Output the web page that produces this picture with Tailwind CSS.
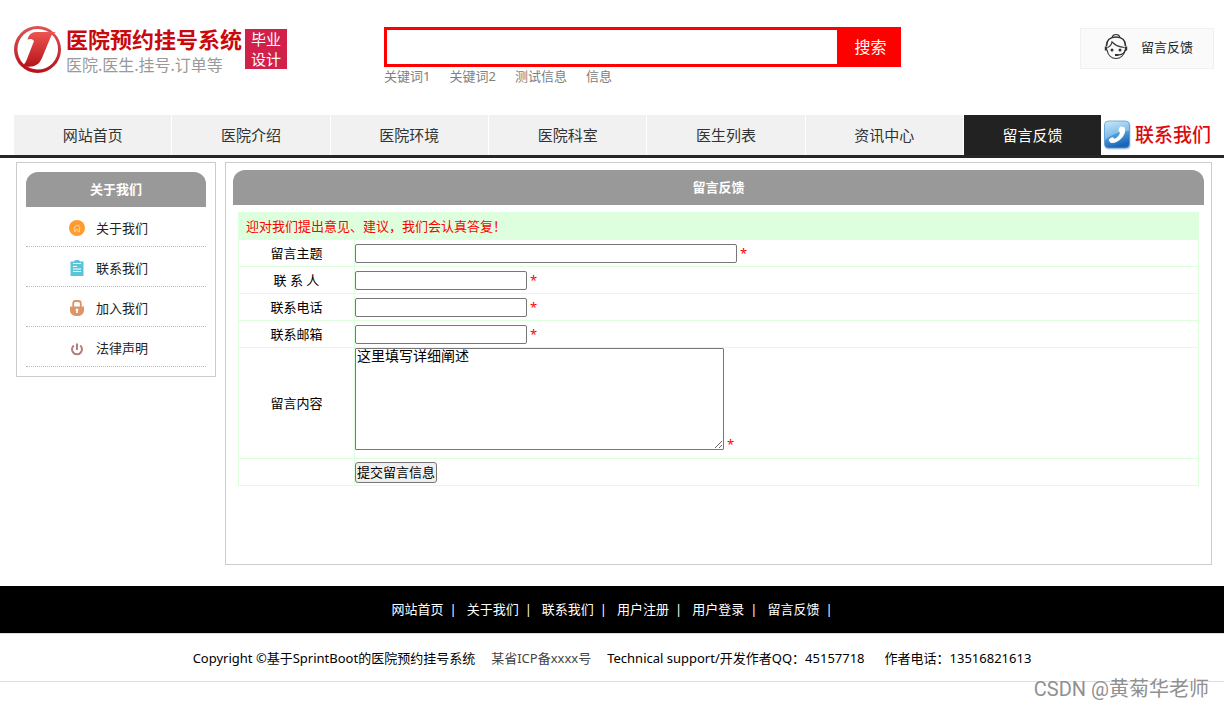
<!DOCTYPE html>
<html lang="zh-CN">
<head>
<meta charset="utf-8">
<meta name="viewport" content="width=device-width, initial-scale=1">
<title>留言反馈</title>
<script src="https://cdn.jsdelivr.net/npm/@tailwindcss/browser@4"></script>
</head>
<body class="relative min-h-screen bg-white font-['Noto_Sans','Noto_Sans_CJK_SC',sans-serif] text-[13px] leading-5 text-black">

<header class="flex h-[115px] items-start pr-[10px] pl-[14px]">
  <a href="#" class="mt-[25px] flex w-[370px] shrink-0 items-start">
    <svg class="h-12 w-12 shrink-0" viewBox="0 0 48 48" aria-hidden="true">
      <defs>
        <linearGradient id="ring" x1="0" y1="0" x2="0" y2="1"><stop offset="0" stop-color="#dc5558"/><stop offset="1" stop-color="#b5141a"/></linearGradient>
        <linearGradient id="jay" x1="0" y1="0" x2="0" y2="1"><stop offset="0" stop-color="#ec5550"/><stop offset="1" stop-color="#b5141a"/></linearGradient>
      </defs>
      <path fill="url(#ring)" fill-rule="evenodd" d="M23.500 1a23.500 23.500 0 1 0 0 47a23.500 23.500 0 1 0 0-47ZM24 4a20 20 0 0 1 20 20a20 20 0 0 1-20 20.500A20 20 0 0 1 3.500 24A20 20 0 0 1 24 4Z"/>
      <path fill="url(#jay)" d="M13.500 14.500c1-4.500 4-7.500 8.500-7.500h20c-3 1-4.500 3-5.500 5.500L28 33c-3 7-8 9.500-16 8.500c-2-.2-2.500-1-2-2c1-1.500 2-3 3-5.500L20 16c-1.500-2.500-4-2.500-6.500-1.500Z"/>
      <path fill="#b5141a" d="M4 33c5 10 16 14 27 11.500C22 49.500 9 47 4 33Z"/>
    </svg>
    <span class="ml-1 block w-[175px]">
      <span class="block text-[22px] leading-[29px] font-bold whitespace-nowrap text-[#c80a0e]">医院预约挂号系统</span>
      <span class="block text-base leading-[22px] whitespace-nowrap text-[#999]">医院.医生.挂号.订单等</span>
    </span>
    <span class="mt-1 ml-1 block w-[42px] bg-[#d1204a] text-center text-[15px] leading-[20px] text-white">毕业<br>设计</span>
  </a>
  <div class="mt-[27px] w-[517px] shrink-0">
    <form class="flex h-10 bg-[#f00]" role="search">
      <input type="search" aria-label="搜索" class="min-w-0 flex-1 appearance-none border-[3px] border-[#f00] bg-white px-2 text-base outline-none">
      <button type="button" class="w-[61px] text-base text-white">搜索</button>
    </form>
    <nav class="flex gap-[19px] leading-[19px] text-[#808080]" aria-label="关键词">
      <a href="#">关键词1</a><a href="#">关键词2</a><a href="#">测试信息</a><a href="#">信息</a>
    </nav>
  </div>
  <a href="#" class="mt-7 ml-auto flex h-[41px] w-[134px] items-center border border-[#f0f0f0] bg-[#fafafa] pb-[3px] pl-[23px] text-[#222]">
    <svg class="mr-[13px] h-7 w-6" viewBox="0 0 24 28" fill="none" stroke="#333" stroke-width="1.200" aria-hidden="true">
      <path d="M8 4.500c1-4 7-4 8 0"/>
      <path d="M2.500 13C2.500 7.500 6 4 12 4s9.500 3.500 9.500 9" stroke-width="1.600"/>
      <path d="M3 17c1 5 4.500 8.500 9 8.500s8-3.500 9-8.500"/>
      <path d="M3.500 14.500c2.500-1 4-3 4.500-5.500c3 3 7 5 12.500 5.500"/>
      <path d="M2 13.500v4M22 13.500v4" stroke-width="2.400"/>
      <path d="M21.500 17c-1 3.500-4 5-8 5"/>
      <path d="M11 22h3.500" stroke-width="2"/>
      <circle cx="8" cy="17" r=".9" fill="#333"/><circle cx="16" cy="17" r=".9" fill="#333"/>
    </svg>
    留言反馈
  </a>
</header>

<nav class="flex h-[43px] border-b-[3px] border-[#262626] pl-[14px] text-[15px] leading-10 text-[#333]" aria-label="主导航">
  <a href="#" class="flex-1 border-r border-white bg-[#f1f1f1] text-center">网站首页</a>
  <a href="#" class="flex-1 border-r border-white bg-[#f1f1f1] text-center">医院介绍</a>
  <a href="#" class="flex-1 border-r border-white bg-[#f1f1f1] text-center">医院环境</a>
  <a href="#" class="flex-1 border-r border-white bg-[#f1f1f1] text-center">医院科室</a>
  <a href="#" class="flex-1 border-r border-white bg-[#f1f1f1] text-center">医生列表</a>
  <a href="#" class="flex-1 border-r border-white bg-[#f1f1f1] text-center">资讯中心</a>
  <a href="#" class="w-[137px] bg-[#222] text-center text-white" aria-current="page">留言反馈</a>
  <a href="#" class="flex w-[123px] items-center gap-1 pl-[2px] text-[19px] font-medium whitespace-nowrap text-[#dc0a0e]">
    <svg class="h-[30px] w-7 shrink-0" viewBox="0 0 28 30" aria-hidden="true">
      <defs><linearGradient id="tile" x1="0" y1="0" x2="0.300" y2="1"><stop offset="0" stop-color="#b5e0f7"/><stop offset=".5" stop-color="#58a9e2"/><stop offset="1" stop-color="#1a66ba"/></linearGradient></defs>
      <rect x="1.500" y="2" width="26" height="27.500" rx="4" fill="#c9d6e8"/>
      <rect x="1.500" y="1" width="25" height="27" rx="4" fill="url(#tile)" stroke="#5a9ad0" stroke-width=".8"/>
      <path d="M2 5c0-2 1-3.500 3.500-3.500h17c2.500 0 3.500 1.500 3.500 3.500v6C18 11 9 14 2 20Z" fill="#fff" opacity=".3"/>
      <path fill="#fff" d="M17.500 6.500l4 .8c1.500 3 .5 7-2.500 10.500c-3.500 4-8 6-11.500 5l-1.800-2.500c0-1.200 2.800-3 4-3l2 1.400c2.300-1 4.800-3.500 5.300-5.900l-1.500-2c0-1.300 1-3.800 2-4.300Z"/>
    </svg>
    联系我们
  </a>
</nav>

<div class="mt-1 mr-3 ml-4 flex items-start gap-[9px]">
  <aside class="w-[200px] shrink-0 border border-[#ccc] p-[9px]">
    <h2 class="rounded-t-[12px] bg-[#999] text-center leading-[35px] font-bold text-white">关于我们</h2>
    <ul class="text-[#222]">
      <li class="border-b border-dotted border-[#bbb]"><a href="#" class="flex h-[39px] items-center gap-[11px] pt-[2px] pl-[43px]">
        <svg class="h-4 w-4" viewBox="0 0 16 16" aria-hidden="true"><circle cx="8" cy="8" r="8" fill="#ff9b2f"/><path d="M4.500 8.200L8 5.200l3.300 2.500M5.300 8v3.700h1.500V9.500h2v2.200h1.700V8M9.800 5.500V4.200" fill="none" stroke="#ffdfb5" stroke-width=".8"/></svg>
        关于我们</a></li>
      <li class="border-b border-dotted border-[#bbb]"><a href="#" class="flex h-[39px] items-center gap-[11px] pt-[2px] pl-[43px]">
        <svg class="h-4 w-4" viewBox="0 0 16 16" aria-hidden="true"><path fill="#58c6d8" d="M1.500 1.500h3L6.500 0h3l2 1.500h3V16h-13Z"/><path d="M4 3.500h8M4 6.500h4M4 9h8M4 11.500h8" stroke="#fff"/><path fill="#58c6d8" d="M5 1h6v2H5Z"/></svg>
        联系我们</a></li>
      <li class="border-b border-dotted border-[#bbb]"><a href="#" class="flex h-[39px] items-center gap-[11px] pt-[2px] pl-[43px]">
        <svg class="h-4 w-4" viewBox="0 0 16 16" aria-hidden="true"><path d="M4.200 7V3.500C4.200 1.800 5.300 1 6.500 1h3c1.200 0 2.300.8 2.300 2.500V7" fill="none" stroke="#df9468" stroke-width="1.800"/><path fill="#df9468" d="M1 6.500h14V10c0 4-3 6-7 6s-7-2-7-6Z"/><path fill="#fff" d="M8 8.500a1.400 1.400 0 0 1 .9 2.500v2H7.100v-2A1.400 1.400 0 0 1 8 8.500Z"/></svg>
        加入我们</a></li>
      <li class="border-b border-dotted border-[#bbb]"><a href="#" class="flex h-[39px] items-center gap-[11px] pt-[2px] pl-[43px]">
        <svg class="h-4 w-4" viewBox="0 0 16 16" fill="none" stroke="#b57d7d" stroke-width="2" aria-hidden="true"><path d="M4.800 5.500a5 5 0 1 0 6.400 0M8 3.500V10"/></svg>
        法律声明</a></li>
    </ul>
  </aside>

  <main class="min-h-[403px] min-w-0 flex-1 border border-[#ccc] p-[7px]">
    <h1 class="mb-[7px] rounded-t-[12px] bg-[#999] text-center leading-[35px] font-bold text-white">留言反馈</h1>
    <form class="px-[5px]">
      <table class="w-full border-collapse border border-[#dfd]">
        <tbody>
          <tr class="h-[27px] bg-[#dfd] text-[#f00]"><td colspan="2" class="pl-[7px]">迎对我们提出意见、建议，我们会认真答复！</td></tr>
          <tr class="h-[27px]">
            <td class="w-[116px] border border-[#dfd] text-center"><label for="subject">留言主题</label></td>
            <td class="border border-[#dfd]"><div class="flex items-center gap-[3px]"><input id="subject" type="text" class="h-[19px] w-[382px] rounded-[2px] border border-[#767676] px-[2px]"><span class="text-[#f00]">*</span></div></td>
          </tr>
          <tr class="h-[27px]">
            <td class="border border-[#dfd] text-center"><label for="contact">联 系 人</label></td>
            <td class="border border-[#dfd]"><div class="flex items-center gap-[3px]"><input id="contact" type="text" class="h-[19px] w-[172px] rounded-[2px] border border-[#767676] px-[2px]"><span class="text-[#f00]">*</span></div></td>
          </tr>
          <tr class="h-[27px]">
            <td class="border border-[#dfd] text-center"><label for="phone">联系电话</label></td>
            <td class="border border-[#dfd]"><div class="flex items-center gap-[3px]"><input id="phone" type="tel" class="h-[19px] w-[172px] rounded-[2px] border border-[#767676] px-[2px]"><span class="text-[#f00]">*</span></div></td>
          </tr>
          <tr class="h-[27px]">
            <td class="border border-[#dfd] text-center"><label for="email">联系邮箱</label></td>
            <td class="border border-[#dfd]"><div class="flex items-center gap-[3px]"><input id="email" type="email" class="h-[19px] w-[172px] rounded-[2px] border border-[#767676] px-[2px]"><span class="text-[#f00]">*</span></div></td>
          </tr>
          <tr class="h-[111px]">
            <td class="border border-[#dfd] text-center"><label for="content">留言内容</label></td>
            <td class="border border-[#dfd] align-top"><div class="flex items-end gap-[3px]"><textarea id="content" class="block h-[102px] w-[369px] resize rounded-[1px] border border-[#767676] px-px text-sm leading-[14px]">这里填写详细阐述</textarea><span class="leading-3 text-[#f00]">*</span></div></td>
          </tr>
          <tr class="h-[27px]">
            <td class="border border-[#dfd]"></td>
            <td class="border border-[#dfd]"><button type="button" class="block h-[21px] w-[82px] rounded-[3px] border border-[#767676] bg-[#efefef] leading-[19px] whitespace-nowrap">提交留言信息</button></td>
          </tr>
        </tbody>
      </table>
    </form>
  </main>
</div>

<footer class="mt-[21px]">
  <nav class="flex h-[47px] items-center justify-center gap-[6px] bg-black pb-[2px] text-white" aria-label="页脚">
    <a href="#">网站首页</a><span class="mr-1">|</span>
    <a href="#">关于我们</a><span class="mr-1">|</span>
    <a href="#">联系我们</a><span class="mr-1">|</span>
    <a href="#">用户注册</a><span class="mr-1">|</span>
    <a href="#">用户登录</a><span class="mr-1">|</span>
    <a href="#">留言反馈</a><span>|</span>
  </nav>
  <div class="flex h-[49px] items-center justify-center gap-4 border-y border-[#ddd] whitespace-nowrap">
    <span>Copyright ©基于SprintBoot的医院预约挂号系统</span>
    <a href="#" class="text-[#444]">某省ICP备xxxx号</a>
    <span class="mr-1">Technical support/开发作者QQ：45157718</span>
    <span>作者电话：13516821613</span>
  </div>
</footer>

<div class="absolute right-[15px] bottom-2 font-[Roboto,'Noto_Sans_CJK_SC',sans-serif] text-xl leading-6 font-normal text-[#909090]">CSDN @黄菊华老师</div>
</body>
</html>
